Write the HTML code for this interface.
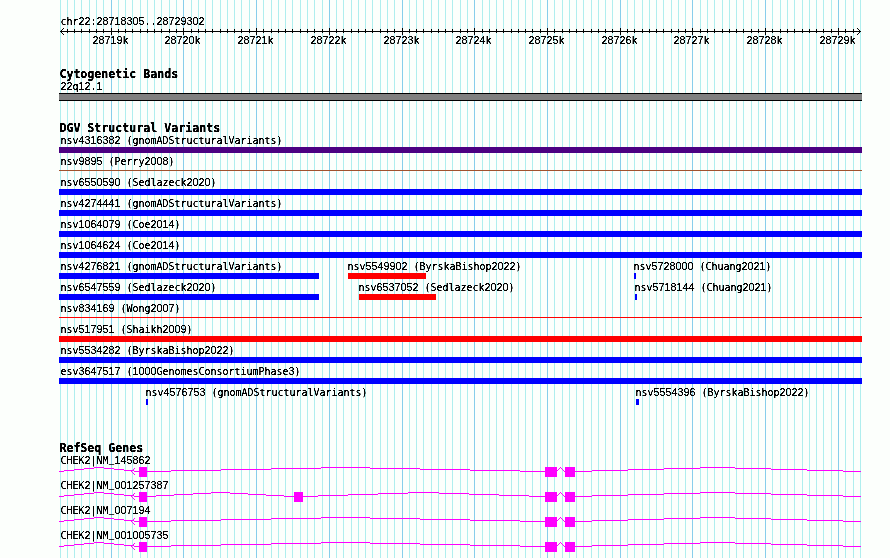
<!DOCTYPE html>
<html lang="en"><head><meta charset="utf-8"><title>chr22:28718305..28729302</title>
<style>html,body{margin:0;padding:0;background:#fcfffc;overflow:hidden}svg{display:block;will-change:transform}text{font-family:"DejaVu Sans Mono","Liberation Mono",monospace;fill:#000;white-space:pre}.s{font-size:9.967px;stroke:#000;stroke-width:.15px}.d{font-family:"Liberation Sans",sans-serif;font-size:10.79px}.b{font-size:11.63px;font-weight:bold;stroke:#000;stroke-width:.2px}</style></head><body>
<svg width="890" height="558" viewBox="0 0 890 558">
<g shape-rendering="crispEdges">
<path stroke="#afeeee" stroke-width="1" fill="none" d="M60.5 0V558M67.5 0V558M74.5 0V558M81.5 0V558M89.5 0V558M96.5 0V558M103.5 0V558M118.5 0V558M125.5 0V558M132.5 0V558M140.5 0V558M147.5 0V558M154.5 0V558M161.5 0V558M169.5 0V558M176.5 0V558M191.5 0V558M198.5 0V558M205.5 0V558M212.5 0V558M220.5 0V558M227.5 0V558M234.5 0V558M241.5 0V558M249.5 0V558M263.5 0V558M271.5 0V558M278.5 0V558M285.5 0V558M292.5 0V558M300.5 0V558M307.5 0V558M314.5 0V558M322.5 0V558M336.5 0V558M343.5 0V558M351.5 0V558M358.5 0V558M365.5 0V558M372.5 0V558M380.5 0V558M387.5 0V558M394.5 0V558M409.5 0V558M416.5 0V558M423.5 0V558M431.5 0V558M438.5 0V558M445.5 0V558M452.5 0V558M460.5 0V558M467.5 0V558M482.5 0V558M489.5 0V558M496.5 0V558M503.5 0V558M511.5 0V558M518.5 0V558M525.5 0V558M532.5 0V558M540.5 0V558M554.5 0V558M562.5 0V558M569.5 0V558M576.5 0V558M583.5 0V558M591.5 0V558M598.5 0V558M605.5 0V558M612.5 0V558M627.5 0V558M634.5 0V558M642.5 0V558M649.5 0V558M656.5 0V558M663.5 0V558M671.5 0V558M678.5 0V558M685.5 0V558M700.5 0V558M707.5 0V558M714.5 0V558M722.5 0V558M729.5 0V558M736.5 0V558M743.5 0V558M751.5 0V558M758.5 0V558M772.5 0V558M780.5 0V558M787.5 0V558M794.5 0V558M802.5 0V558M809.5 0V558M816.5 0V558M823.5 0V558M831.5 0V558M845.5 0V558M853.5 0V558M860.5 0V558"/>
<path stroke="#87ceeb" stroke-width="1" fill="none" d="M111.5 0V558M183.5 0V558M256.5 0V558M329.5 0V558M402.5 0V558M474.5 0V558M547.5 0V558M620.5 0V558M692.5 0V558M765.5 0V558M838.5 0V558"/>
<path stroke="#000" stroke-width="1" fill="none" d="M60 31.5H861M67.5 29V33M74.5 29V33M81.5 29V33M89.5 29V33M96.5 29V33M103.5 29V33M118.5 29V33M125.5 29V33M132.5 29V33M140.5 29V33M147.5 29V33M154.5 29V33M161.5 29V33M169.5 29V33M176.5 29V33M191.5 29V33M198.5 29V33M205.5 29V33M212.5 29V33M220.5 29V33M227.5 29V33M234.5 29V33M241.5 29V33M249.5 29V33M263.5 29V33M271.5 29V33M278.5 29V33M285.5 29V33M292.5 29V33M300.5 29V33M307.5 29V33M314.5 29V33M322.5 29V33M336.5 29V33M343.5 29V33M351.5 29V33M358.5 29V33M365.5 29V33M372.5 29V33M380.5 29V33M387.5 29V33M394.5 29V33M409.5 29V33M416.5 29V33M423.5 29V33M431.5 29V33M438.5 29V33M445.5 29V33M452.5 29V33M460.5 29V33M467.5 29V33M482.5 29V33M489.5 29V33M496.5 29V33M503.5 29V33M511.5 29V33M518.5 29V33M525.5 29V33M532.5 29V33M540.5 29V33M554.5 29V33M562.5 29V33M569.5 29V33M576.5 29V33M583.5 29V33M591.5 29V33M598.5 29V33M605.5 29V33M612.5 29V33M627.5 29V33M634.5 29V33M642.5 29V33M649.5 29V33M656.5 29V33M663.5 29V33M671.5 29V33M678.5 29V33M685.5 29V33M700.5 29V33M707.5 29V33M714.5 29V33M722.5 29V33M729.5 29V33M736.5 29V33M743.5 29V33M751.5 29V33M758.5 29V33M772.5 29V33M780.5 29V33M787.5 29V33M794.5 29V33M802.5 29V33M809.5 29V33M816.5 29V33M823.5 29V33M831.5 29V33M845.5 29V33M853.5 29V33M111.5 28V35M183.5 28V35M256.5 28V35M329.5 28V35M402.5 28V35M474.5 28V35M547.5 28V35M620.5 28V35M692.5 28V35M765.5 28V35M838.5 28V35"/>
</g>
<g shape-rendering="crispEdges">
<path stroke="#000" stroke-width="1" fill="none" d="M63 28.5h1M62 29.5h1M61 30.5h1M60 31.5h1M61 32.5h1M62 33.5h1M63 34.5h1M857 28.5h1M858 29.5h1M859 30.5h1M860 31.5h1M859 32.5h1M858 33.5h1M857 34.5h1"/>
</g>
<g shape-rendering="crispEdges">
<rect x="59" y="93" width="803" height="8" fill="#000"/>
<rect x="59" y="94" width="803" height="6" fill="#808080"/>
<rect x="59" y="147" width="803" height="6" fill="#4b0082"/>
<rect x="59" y="170" width="803" height="1" fill="#a0522d"/>
<rect x="59" y="189" width="803" height="6" fill="#0000ff"/>
<rect x="59" y="210" width="803" height="6" fill="#0000ff"/>
<rect x="59" y="231" width="803" height="6" fill="#0000ff"/>
<rect x="59" y="252" width="803" height="6" fill="#0000ff"/>
<rect x="59" y="273" width="260" height="6" fill="#0000ff"/>
<rect x="348" y="273" width="78" height="6" fill="#ff0000"/>
<rect x="634" y="273" width="2" height="6" fill="#0000ff"/>
<rect x="59" y="294" width="260" height="6" fill="#0000ff"/>
<rect x="359" y="294" width="77" height="6" fill="#ff0000"/>
<rect x="635" y="294" width="2" height="6" fill="#0000ff"/>
<rect x="59" y="317" width="803" height="1" fill="#ff0000"/>
<rect x="59" y="336" width="803" height="6" fill="#ff0000"/>
<rect x="59" y="357" width="803" height="6" fill="#0000ff"/>
<rect x="59" y="378" width="803" height="6" fill="#0000ff"/>
<rect x="146" y="399" width="2" height="6" fill="#0000ff"/>
<rect x="636" y="399" width="3" height="6" fill="#0000ff"/>
<rect x="139" y="467" width="8" height="10" fill="#ff00ff"/>
<rect x="545" y="467" width="12" height="10" fill="#ff00ff"/>
<rect x="565" y="467" width="10" height="10" fill="#ff00ff"/>
<path stroke="#ff00ff" stroke-width="1" fill="none" d="M94 467.5h10M84 468.5h10M104 468.5h10M74 469.5h10M114 469.5h10M64 470.5h10M124 470.5h10M59 471.5h5M134 471.5h5M321 467.5h49M271 468.5h50M370 468.5h50M221 469.5h50M420 469.5h50M171 470.5h50M470 470.5h50M146 471.5h25M520 471.5h25M560 467.5h1M559 468.5h1M561 468.5h1M558 469.5h1M562 469.5h1M557 470.5h1M563 470.5h1M556 471.5h1M564 471.5h1M700 467.5h35M664 468.5h36M735 468.5h36M628 469.5h36M771 469.5h36M592 470.5h36M807 470.5h36M574 471.5h18M843 471.5h18"/>
<rect x="139" y="492" width="8" height="10" fill="#ff00ff"/>
<rect x="294" y="492" width="9" height="10" fill="#ff00ff"/>
<rect x="545" y="492" width="12" height="10" fill="#ff00ff"/>
<rect x="565" y="492" width="10" height="10" fill="#ff00ff"/>
<path stroke="#ff00ff" stroke-width="1" fill="none" d="M94 492.5h10M84 493.5h10M104 493.5h10M74 494.5h10M114 494.5h10M64 495.5h10M124 495.5h10M59 496.5h5M134 496.5h5M211 492.5h19M193 493.5h18M230 493.5h18M174 494.5h19M248 494.5h18M156 495.5h18M266 495.5h18M146 496.5h10M284 496.5h10M408 492.5h31M378 493.5h30M439 493.5h30M348 494.5h30M469 494.5h30M318 495.5h30M499 495.5h30M302 496.5h16M529 496.5h16M560 492.5h1M559 493.5h1M561 493.5h1M558 494.5h1M562 494.5h1M557 495.5h1M563 495.5h1M556 496.5h1M564 496.5h1M700 492.5h35M664 493.5h36M735 493.5h36M628 494.5h36M771 494.5h36M592 495.5h36M807 495.5h36M574 496.5h18M843 496.5h18"/>
<rect x="139" y="517" width="8" height="10" fill="#ff00ff"/>
<rect x="545" y="517" width="12" height="10" fill="#ff00ff"/>
<rect x="565" y="517" width="10" height="10" fill="#ff00ff"/>
<path stroke="#ff00ff" stroke-width="1" fill="none" d="M94 517.5h10M84 518.5h10M104 518.5h10M74 519.5h10M114 519.5h10M64 520.5h10M124 520.5h10M59 521.5h5M134 521.5h5M321 517.5h49M271 518.5h50M370 518.5h50M221 519.5h50M420 519.5h50M171 520.5h50M470 520.5h50M146 521.5h25M520 521.5h25M560 517.5h1M559 518.5h1M561 518.5h1M558 519.5h1M562 519.5h1M557 520.5h1M563 520.5h1M556 521.5h1M564 521.5h1M700 517.5h35M664 518.5h36M735 518.5h36M628 519.5h36M771 519.5h36M592 520.5h36M807 520.5h36M574 521.5h18M843 521.5h18"/>
<rect x="139" y="542" width="8" height="10" fill="#ff00ff"/>
<rect x="545" y="542" width="12" height="10" fill="#ff00ff"/>
<rect x="565" y="542" width="10" height="10" fill="#ff00ff"/>
<path stroke="#ff00ff" stroke-width="1" fill="none" d="M94 542.5h10M84 543.5h10M104 543.5h10M74 544.5h10M114 544.5h10M64 545.5h10M124 545.5h10M59 546.5h5M134 546.5h5M321 542.5h49M271 543.5h50M370 543.5h50M221 544.5h50M420 544.5h50M171 545.5h50M470 545.5h50M146 546.5h25M520 546.5h25M560 542.5h1M559 543.5h1M561 543.5h1M558 544.5h1M562 544.5h1M557 545.5h1M563 545.5h1M556 546.5h1M564 546.5h1M700 542.5h35M664 543.5h36M735 543.5h36M628 544.5h36M771 544.5h36M592 545.5h36M807 545.5h36M574 546.5h18M843 546.5h18"/>
</g>
<g shape-rendering="crispEdges">
<path stroke="#ff00ff" stroke-width="1" fill="none" d="M134 468.5h1M133 469.5h1M132 470.5h1M131 471.5h1M132 472.5h1M133 473.5h1M134 474.5h1"/>
<path stroke="#ff00ff" stroke-width="1" fill="none" d="M134 493.5h1M133 494.5h1M132 495.5h1M131 496.5h1M132 497.5h1M133 498.5h1M134 499.5h1"/>
<path stroke="#ff00ff" stroke-width="1" fill="none" d="M134 518.5h1M133 519.5h1M132 520.5h1M131 521.5h1M132 522.5h1M133 523.5h1M134 524.5h1"/>
<path stroke="#ff00ff" stroke-width="1" fill="none" d="M134 543.5h1M133 544.5h1M132 545.5h1M131 546.5h1M132 547.5h1M133 548.5h1M134 549.5h1"/>
</g>
<filter id="tx" filterUnits="userSpaceOnUse" x="0" y="0" width="890" height="558" color-interpolation-filters="sRGB"><feComponentTransfer><feFuncA type="linear" slope="3" intercept="-0.9"/></feComponentTransfer></filter>
<g filter="url(#tx)">
<text class="s" transform="translate(60.5 25) scale(1 1.07)"><tspan x="0" y="0">chr</tspan><tspan class="d" x="18" y="0">22</tspan><tspan x="30" y="0">:</tspan><tspan class="d" x="36" y="0">28718305</tspan><tspan x="84" y="0">..</tspan><tspan class="d" x="96" y="0">28729302</tspan></text>
<text class="s" transform="translate(92.5 44) scale(1 1.07)"><tspan class="d" x="0" y="0">28719</tspan><tspan x="30" y="0">k</tspan></text>
<text class="s" transform="translate(164.5 44) scale(1 1.07)"><tspan class="d" x="0" y="0">28720</tspan><tspan x="30" y="0">k</tspan></text>
<text class="s" transform="translate(237.5 44) scale(1 1.07)"><tspan class="d" x="0" y="0">28721</tspan><tspan x="30" y="0">k</tspan></text>
<text class="s" transform="translate(310.5 44) scale(1 1.07)"><tspan class="d" x="0" y="0">28722</tspan><tspan x="30" y="0">k</tspan></text>
<text class="s" transform="translate(383.5 44) scale(1 1.07)"><tspan class="d" x="0" y="0">28723</tspan><tspan x="30" y="0">k</tspan></text>
<text class="s" transform="translate(455.5 44) scale(1 1.07)"><tspan class="d" x="0" y="0">28724</tspan><tspan x="30" y="0">k</tspan></text>
<text class="s" transform="translate(528.5 44) scale(1 1.07)"><tspan class="d" x="0" y="0">28725</tspan><tspan x="30" y="0">k</tspan></text>
<text class="s" transform="translate(601.5 44) scale(1 1.07)"><tspan class="d" x="0" y="0">28726</tspan><tspan x="30" y="0">k</tspan></text>
<text class="s" transform="translate(673.5 44) scale(1 1.07)"><tspan class="d" x="0" y="0">28727</tspan><tspan x="30" y="0">k</tspan></text>
<text class="s" transform="translate(746.5 44) scale(1 1.07)"><tspan class="d" x="0" y="0">28728</tspan><tspan x="30" y="0">k</tspan></text>
<text class="s" transform="translate(819.5 44) scale(1 1.07)"><tspan class="d" x="0" y="0">28729</tspan><tspan x="30" y="0">k</tspan></text>
<text class="s" transform="translate(60.5 144) scale(1 1.07)"><tspan x="0" y="0">nsv</tspan><tspan class="d" x="18" y="0">4316382 </tspan><tspan x="66" y="0">(gnomADStructuralVariants)</tspan></text>
<text class="s" transform="translate(60.5 165) scale(1 1.07)"><tspan x="0" y="0">nsv</tspan><tspan class="d" x="18" y="0">9895 </tspan><tspan x="48" y="0">(Perry</tspan><tspan class="d" x="84" y="0">2008</tspan><tspan x="108" y="0">)</tspan></text>
<text class="s" transform="translate(60.5 186) scale(1 1.07)"><tspan x="0" y="0">nsv</tspan><tspan class="d" x="18" y="0">6550590 </tspan><tspan x="66" y="0">(Sedlazeck</tspan><tspan class="d" x="126" y="0">2020</tspan><tspan x="150" y="0">)</tspan></text>
<text class="s" transform="translate(60.5 207) scale(1 1.07)"><tspan x="0" y="0">nsv</tspan><tspan class="d" x="18" y="0">4274441 </tspan><tspan x="66" y="0">(gnomADStructuralVariants)</tspan></text>
<text class="s" transform="translate(60.5 228) scale(1 1.07)"><tspan x="0" y="0">nsv</tspan><tspan class="d" x="18" y="0">1064079 </tspan><tspan x="66" y="0">(Coe</tspan><tspan class="d" x="90" y="0">2014</tspan><tspan x="114" y="0">)</tspan></text>
<text class="s" transform="translate(60.5 249) scale(1 1.07)"><tspan x="0" y="0">nsv</tspan><tspan class="d" x="18" y="0">1064624 </tspan><tspan x="66" y="0">(Coe</tspan><tspan class="d" x="90" y="0">2014</tspan><tspan x="114" y="0">)</tspan></text>
<text class="s" transform="translate(60.5 270) scale(1 1.07)"><tspan x="0" y="0">nsv</tspan><tspan class="d" x="18" y="0">4276821 </tspan><tspan x="66" y="0">(gnomADStructuralVariants)</tspan></text>
<text class="s" transform="translate(347.5 270) scale(1 1.07)"><tspan x="0" y="0">nsv</tspan><tspan class="d" x="18" y="0">5549902 </tspan><tspan x="66" y="0">(ByrskaBishop</tspan><tspan class="d" x="144" y="0">2022</tspan><tspan x="168" y="0">)</tspan></text>
<text class="s" transform="translate(633.5 270) scale(1 1.07)"><tspan x="0" y="0">nsv</tspan><tspan class="d" x="18" y="0">5728000 </tspan><tspan x="66" y="0">(Chuang</tspan><tspan class="d" x="108" y="0">2021</tspan><tspan x="132" y="0">)</tspan></text>
<text class="s" transform="translate(60.5 291) scale(1 1.07)"><tspan x="0" y="0">nsv</tspan><tspan class="d" x="18" y="0">6547559 </tspan><tspan x="66" y="0">(Sedlazeck</tspan><tspan class="d" x="126" y="0">2020</tspan><tspan x="150" y="0">)</tspan></text>
<text class="s" transform="translate(358.5 291) scale(1 1.07)"><tspan x="0" y="0">nsv</tspan><tspan class="d" x="18" y="0">6537052 </tspan><tspan x="66" y="0">(Sedlazeck</tspan><tspan class="d" x="126" y="0">2020</tspan><tspan x="150" y="0">)</tspan></text>
<text class="s" transform="translate(634.5 291) scale(1 1.07)"><tspan x="0" y="0">nsv</tspan><tspan class="d" x="18" y="0">5718144 </tspan><tspan x="66" y="0">(Chuang</tspan><tspan class="d" x="108" y="0">2021</tspan><tspan x="132" y="0">)</tspan></text>
<text class="s" transform="translate(60.5 312) scale(1 1.07)"><tspan x="0" y="0">nsv</tspan><tspan class="d" x="18" y="0">834169 </tspan><tspan x="60" y="0">(Wong</tspan><tspan class="d" x="90" y="0">2007</tspan><tspan x="114" y="0">)</tspan></text>
<text class="s" transform="translate(60.5 333) scale(1 1.07)"><tspan x="0" y="0">nsv</tspan><tspan class="d" x="18" y="0">517951 </tspan><tspan x="60" y="0">(Shaikh</tspan><tspan class="d" x="102" y="0">2009</tspan><tspan x="126" y="0">)</tspan></text>
<text class="s" transform="translate(60.5 354) scale(1 1.07)"><tspan x="0" y="0">nsv</tspan><tspan class="d" x="18" y="0">5534282 </tspan><tspan x="66" y="0">(ByrskaBishop</tspan><tspan class="d" x="144" y="0">2022</tspan><tspan x="168" y="0">)</tspan></text>
<text class="s" transform="translate(60.5 375) scale(1 1.07)"><tspan x="0" y="0">esv</tspan><tspan class="d" x="18" y="0">3647517 </tspan><tspan x="66" y="0">(</tspan><tspan class="d" x="72" y="0">1000</tspan><tspan x="96" y="0">GenomesConsortiumPhase</tspan><tspan class="d" x="228" y="0">3</tspan><tspan x="234" y="0">)</tspan></text>
<text class="s" transform="translate(145.5 396) scale(1 1.07)"><tspan x="0" y="0">nsv</tspan><tspan class="d" x="18" y="0">4576753 </tspan><tspan x="66" y="0">(gnomADStructuralVariants)</tspan></text>
<text class="s" transform="translate(635.5 396) scale(1 1.07)"><tspan x="0" y="0">nsv</tspan><tspan class="d" x="18" y="0">5554396 </tspan><tspan x="66" y="0">(ByrskaBishop</tspan><tspan class="d" x="144" y="0">2022</tspan><tspan x="168" y="0">)</tspan></text>
<text class="s" transform="translate(60.5 464) scale(1 1.07)"><tspan x="0" y="0">CHEK</tspan><tspan class="d" x="24" y="0">2</tspan><tspan x="30" y="0">|NM</tspan><tspan x="48" y="-1.9">_</tspan><tspan class="d" x="54" y="0">145862</tspan></text>
<text class="s" transform="translate(60.5 489) scale(1 1.07)"><tspan x="0" y="0">CHEK</tspan><tspan class="d" x="24" y="0">2</tspan><tspan x="30" y="0">|NM</tspan><tspan x="48" y="-1.9">_</tspan><tspan class="d" x="54" y="0">001257387</tspan></text>
<text class="s" transform="translate(60.5 514) scale(1 1.07)"><tspan x="0" y="0">CHEK</tspan><tspan class="d" x="24" y="0">2</tspan><tspan x="30" y="0">|NM</tspan><tspan x="48" y="-1.9">_</tspan><tspan class="d" x="54" y="0">007194</tspan></text>
<text class="s" transform="translate(60.5 539) scale(1 1.07)"><tspan x="0" y="0">CHEK</tspan><tspan class="d" x="24" y="0">2</tspan><tspan x="30" y="0">|NM</tspan><tspan x="48" y="-1.9">_</tspan><tspan class="d" x="54" y="0">001005735</tspan></text>
<text class="b" transform="translate(59.4 78) scale(1 1.05)">Cytogenetic Bands</text>
<text class="s" transform="translate(60.5 90) scale(1 1.07)"><tspan class="d" x="0" y="0">22</tspan><tspan x="12" y="0">q</tspan><tspan class="d" x="18" y="0">12</tspan><tspan x="30" y="0">.</tspan><tspan class="d" x="36" y="0">1</tspan></text>
<text class="b" transform="translate(59.4 132) scale(1 1.05)">DGV Structural Variants</text>
<text class="b" transform="translate(59.4 452) scale(1 1.05)">RefSeq Genes</text>
</g>
</svg></body></html>
